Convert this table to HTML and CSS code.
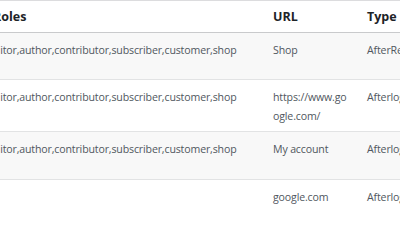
FILE: index.html
```html
<!DOCTYPE html>
<html>
<head>
<meta charset="utf-8">
<link rel="stylesheet" href="styles.css">
</head>
<body>
<div class="crop">
<table class="list">
  <colgroup>
    <col class="c-roles">
    <col class="c-url">
    <col class="c-type">
  </colgroup>
  <thead>
    <tr><th class="h-roles">Roles</th><th>URL</th><th>Type</th></tr>
  </thead>
  <tbody>
    <tr class="alt r1">
      <td>editor,author,contributor,subscriber,customer,shop</td>
      <td>Shop</td>
      <td>AfterRegister</td>
    </tr>
    <tr class="r2">
      <td>editor,author,contributor,subscriber,customer,shop</td>
      <td class="url">https://www.google.com/</td>
      <td>Afterlogin</td>
    </tr>
    <tr class="alt r3">
      <td>editor,author,contributor,subscriber,customer,shop</td>
      <td>My account</td>
      <td>Afterlogin</td>
    </tr>
    <tr class="r4">
      <td></td>
      <td>google.com</td>
      <td>Afterlogin</td>
    </tr>
  </tbody>
</table>
</div>
</body>
</html>
```
FILE: styles.css
```css
html, body {
  margin: 0;
  padding: 0;
  background: #ffffff;
}
.crop {
  width: 400px;
  height: 240px;
  overflow: hidden;
}
.list {
  border-collapse: collapse;
  table-layout: fixed;
  width: 490px;
  margin-left: -22px;
  font-family: "Open Sans", "Noto Sans", sans-serif;
  font-size: 10.6px;
  letter-spacing: -0.15px;
  line-height: 19px;
  color: #50575e;
  border-top: 1px solid #dcdcde;
}
.c-roles { width: 285px; }
.c-url { width: 94px; }
.c-type { width: 111px; }
.list th {
  text-align: left;
  font-weight: 700;
  font-size: 12.5px;
  letter-spacing: 0;
  color: #1d2327;
  height: 31px;
  padding: 0 8px 0 10px;
  vertical-align: middle;
  border-bottom: 1px solid #c9cacc;
}
.list th.h-roles { text-indent: 5px; }
.list td {
  padding: 8px 8px 4px 10px;
  vertical-align: top;
  border-bottom: 1px solid #e2e3e4;
  white-space: nowrap;
  overflow: hidden;
}
.list td.url {
  white-space: normal;
  word-break: break-all;
}
.list tr.alt td { background: #f8f8f8; }
.r1 td { height: 34px; }
.r2 td { height: 39px; }
.r3 td { height: 35px; }
.r4 td { height: 60px; border-bottom: none; }
```
